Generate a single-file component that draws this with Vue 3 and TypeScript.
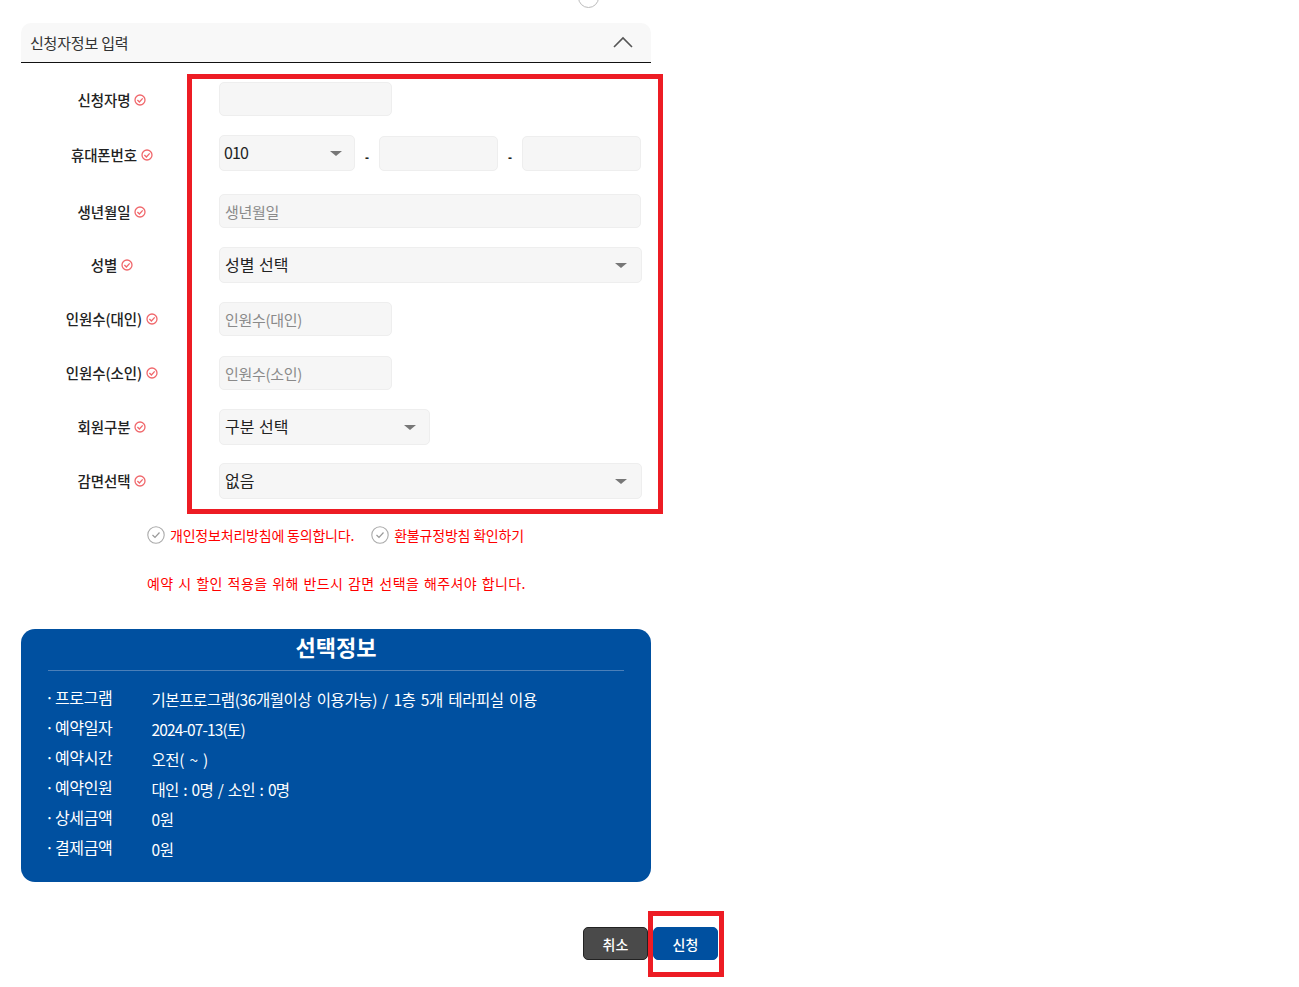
<script setup lang="ts">
interface Row { label: string; kind: string; value?: string; placeholder?: string }
const rows: Row[] = [
  { label: '신청자명', kind: 'short' },
  { label: '휴대폰번호', kind: 'phone', value: '010' },
  { label: '생년월일', kind: 'full', placeholder: '생년월일' },
  { label: '성별', kind: 'select-full', value: '성별 선택' },
  { label: '인원수(대인)', kind: 'short', placeholder: '인원수(대인)' },
  { label: '인원수(소인)', kind: 'short', placeholder: '인원수(소인)' },
  { label: '회원구분', kind: 'select-mid', value: '구분 선택' },
  { label: '감면선택', kind: 'select-full', value: '없음' },
]
const info: { k: string; v: string; tight?: boolean }[] = [
  { k: '프로그램', v: '기본프로그램(36개월이상 이용가능) / 1층 5개 테라피실 이용' },
  { k: '예약일자', v: '2024-07-13(토)', tight: true },
  { k: '예약시간', v: '오전( ~ )' },
  { k: '예약인원', v: '대인 : 0명 / 소인 : 0명', tight: true },
  { k: '상세금액', v: '0원' },
  { k: '결제금액', v: '0원' },
]
</script>

<template>
  <div class="page">
    <div class="clip-top"><span class="radio-top"></span></div>
    <div class="section-head">
      <span class="head-text">신청자정보 입력</span>
      <svg class="chev" width="20" height="12" viewBox="0 0 20 12"><path d="M1 11 L10 2 L19 11" fill="none" stroke="#555" stroke-width="1.6" /></svg>
    </div>

    <div class="form">
      <template v-for="r in rows" :key="r.label">
        <div class="label" :class="{ 'label-phone': r.kind === 'phone', 'label-count': !!r.placeholder && r.kind === 'short' }">
          <span>{{ r.label }}</span>
          <svg class="req" width="12" height="12" viewBox="0 0 12 12"><circle cx="6" cy="6" r="5" fill="none" stroke="#f0686c" stroke-width="1.3" /><path d="M3.4 6 L5.4 8 L8.7 4.4" fill="none" stroke="#f0686c" stroke-width="1.3" /></svg>
        </div>
        <div class="control">
          <div v-if="r.kind === 'short'" class="field w-short">{{ r.placeholder }}</div>
          <div v-else-if="r.kind === 'full'" class="field w-full">{{ r.placeholder }}</div>
          <div v-else-if="r.kind === 'phone'" class="phone">
            <div class="select w-phone"><span class="num">{{ r.value }}</span><i class="caret"></i></div>
            <span class="dash">-</span>
            <div class="field w-part"></div>
            <span class="dash">-</span>
            <div class="field w-part"></div>
          </div>
          <div v-else class="select" :class="r.kind === 'select-mid' ? 'w-mid' : 'w-wide'"><span class="sel-text">{{ r.value }}</span><i class="caret"></i></div>
        </div>
      </template>
    </div>

    <div class="agree">
      <label class="check">
        <svg width="18" height="18" viewBox="0 0 18 18"><circle cx="9" cy="9" r="8.2" fill="none" stroke="#aaa" stroke-width="1.1" /><path d="M5.5 9 L8 11.5 L12.5 6.5" fill="none" stroke="#999" stroke-width="1.2" /></svg>
        개인정보처리방침에 동의합니다.
      </label>
      <label class="check">
        <svg width="18" height="18" viewBox="0 0 18 18"><circle cx="9" cy="9" r="8.2" fill="none" stroke="#aaa" stroke-width="1.1" /><path d="M5.5 9 L8 11.5 L12.5 6.5" fill="none" stroke="#999" stroke-width="1.2" /></svg>
        환불규정방침 확인하기
      </label>
    </div>
    <p class="notice">예약 시 할인 적용을 위해 반드시 감면 선택을 해주셔야 합니다.</p>

    <section class="summary">
      <h2>선택정보</h2>
      <ul>
        <li v-for="i in info" :key="i.k">
          <span class="k">{{ i.k }}</span>
          <span class="v" :class="{ tight: i.tight }">{{ i.v }}</span>
        </li>
      </ul>
    </section>

    <div class="actions">
      <button class="btn cancel">취소</button>
      <button class="btn apply">신청</button>
    </div>

    <div class="mark mark-form"></div>
    <div class="mark mark-btn"></div>
  </div>
</template>

<style>
html, body { background: #fff; }
</style>

<style scoped>
.page {
  position: relative;
  box-sizing: border-box;
  width: 1299px;
  height: 987px;
  padding-left: 21px;
  font-family: "Noto Sans CJK KR", "Liberation Sans", sans-serif;
  color: #222;
  overflow: hidden;
}
.clip-top { height: 23px; position: relative; }
.radio-top {
  position: absolute;
  left: 557px;
  top: -13px;
  width: 19px;
  height: 19px;
  border: 1px solid #bbb;
  border-radius: 50%;
}
.section-head {
  width: 630px;
  box-sizing: border-box;
  height: 40px;
  background: #f8f8f8;
  border-bottom: 1px solid #111;
  border-radius: 10px 10px 0 0;
  display: flex;
  align-items: center;
  justify-content: space-between;
  padding: 0 18px 0 9px;
  font-size: 15px;
  letter-spacing: -0.2px;
  color: #333;
}
.chev { display: block; margin-top: -1px; }
.form {
  width: 630px;
  margin-top: 19px;
  display: grid;
  grid-template-columns: 182px 1fr;
  grid-template-rows: 53px 59px 53px 55px 54px 53px 54px 36px;
}
.label {
  display: flex;
  justify-content: center;
  align-items: center;
  gap: 4px;
  height: 34px;
  font-size: 14.5px;
  font-weight: 500;
  letter-spacing: -0.1px;
  color: #222;
}
.label-phone { height: 38px; }
.label-count { height: 32px; }
.req { display: block; margin-top: 2px; }
.control { padding-left: 16px; }
.field, .select {
  box-sizing: border-box;
  background: #f6f6f6;
  border: 1px solid #eee;
  border-radius: 5px;
}
.field {
  height: 35px;
  line-height: 33px;
  padding-left: 5px;
  font-size: 15px;
  color: #8a8a8a;
  letter-spacing: -0.3px;
}
.select {
  height: 36px;
  display: flex;
  align-items: center;
  justify-content: space-between;
  padding: 0 14px 0 5px;
  font-size: 16px;
  color: #222;
}
.sel-text { margin-top: -2px; word-spacing: 1px; }
.num { letter-spacing: -0.9px; margin-top: -3px; }
.caret {
  width: 0;
  height: 0;
  border-left: 6px solid transparent;
  border-right: 6px solid transparent;
  border-top: 5px solid #777;
}
.w-short { width: 173px; height: 34px; line-height: 33px; }
.w-full { width: 422px; height: 34px; }
.w-wide { width: 423px; }
.w-mid { width: 211px; padding-right: 13px; }
.w-phone { width: 136px; padding-left: 4px; padding-right: 12px; }
.w-part { width: 119px; }
.phone { display: flex; align-items: flex-end; height: 36px; }
.dash {
  width: 24px;
  text-align: center;
  font: 700 12px/26px "Liberation Sans", sans-serif;
  color: #222;
}
.agree {
  margin-top: 25px;
  display: flex;
  gap: 17px;
  padding-left: 126px;
  font-size: 14px;
  letter-spacing: -0.2px;
  color: #f00;
}
.check { display: flex; align-items: center; gap: 5px; height: 22px; }
.notice {
  margin: 26px 0 0 126px;
  height: 22px;
  line-height: 22px;
  font-size: 14px;
  letter-spacing: 0.4px;
  word-spacing: 1.2px;
  color: #f00;
}
.summary {
  width: 630px;
  margin-top: 35px;
  height: 253px;
  box-sizing: border-box;
  background: #0050a0;
  border-radius: 14px;
  padding: 0 27px;
  color: #fff;
}
.summary h2 {
  margin: 0;
  height: 41px;
  line-height: 35px;
  text-align: center;
  font-size: 22px;
  font-weight: 700;
  border-bottom: 1px solid #4a7fb9;
}
.summary ul { list-style: none; margin: 13px 0 0; padding: 0; }
.summary li {
  display: flex;
  height: 30px;
  align-items: center;
  font-size: 15.5px;
}
.k {
  width: 103.5px;
  flex: none;
  position: relative;
  padding-left: 7px;
  box-sizing: border-box;
  margin-top: -4px;
  font-size: 16px;
  letter-spacing: -0.4px;
}
.k::before { content: "·"; position: absolute; left: -3px; }
.v { letter-spacing: -0.4px; word-spacing: 2.3px; }
.v.tight { letter-spacing: -0.85px; }
.actions {
  margin-top: 45px;
  display: flex;
  justify-content: flex-end;
  gap: 5px;
  width: 697px;
}
.btn {
  width: 65px;
  height: 33px;
  border-radius: 5px;
  color: #fff;
  font: 500 14px "Noto Sans CJK KR", "Liberation Sans", sans-serif;
  padding: 0;
}
.cancel { background: #4a4a4a; border: 1px solid #222; }
.apply { background: #0050a0; border: 1px solid #0050a0; }
.mark {
  position: absolute;
  box-sizing: border-box;
  border: 5px solid #ed1c24;
}
.mark-form { left: 187px; top: 74px; width: 476px; height: 440px; }
.mark-btn { left: 648px; top: 911px; width: 76px; height: 66px; }
</style>
